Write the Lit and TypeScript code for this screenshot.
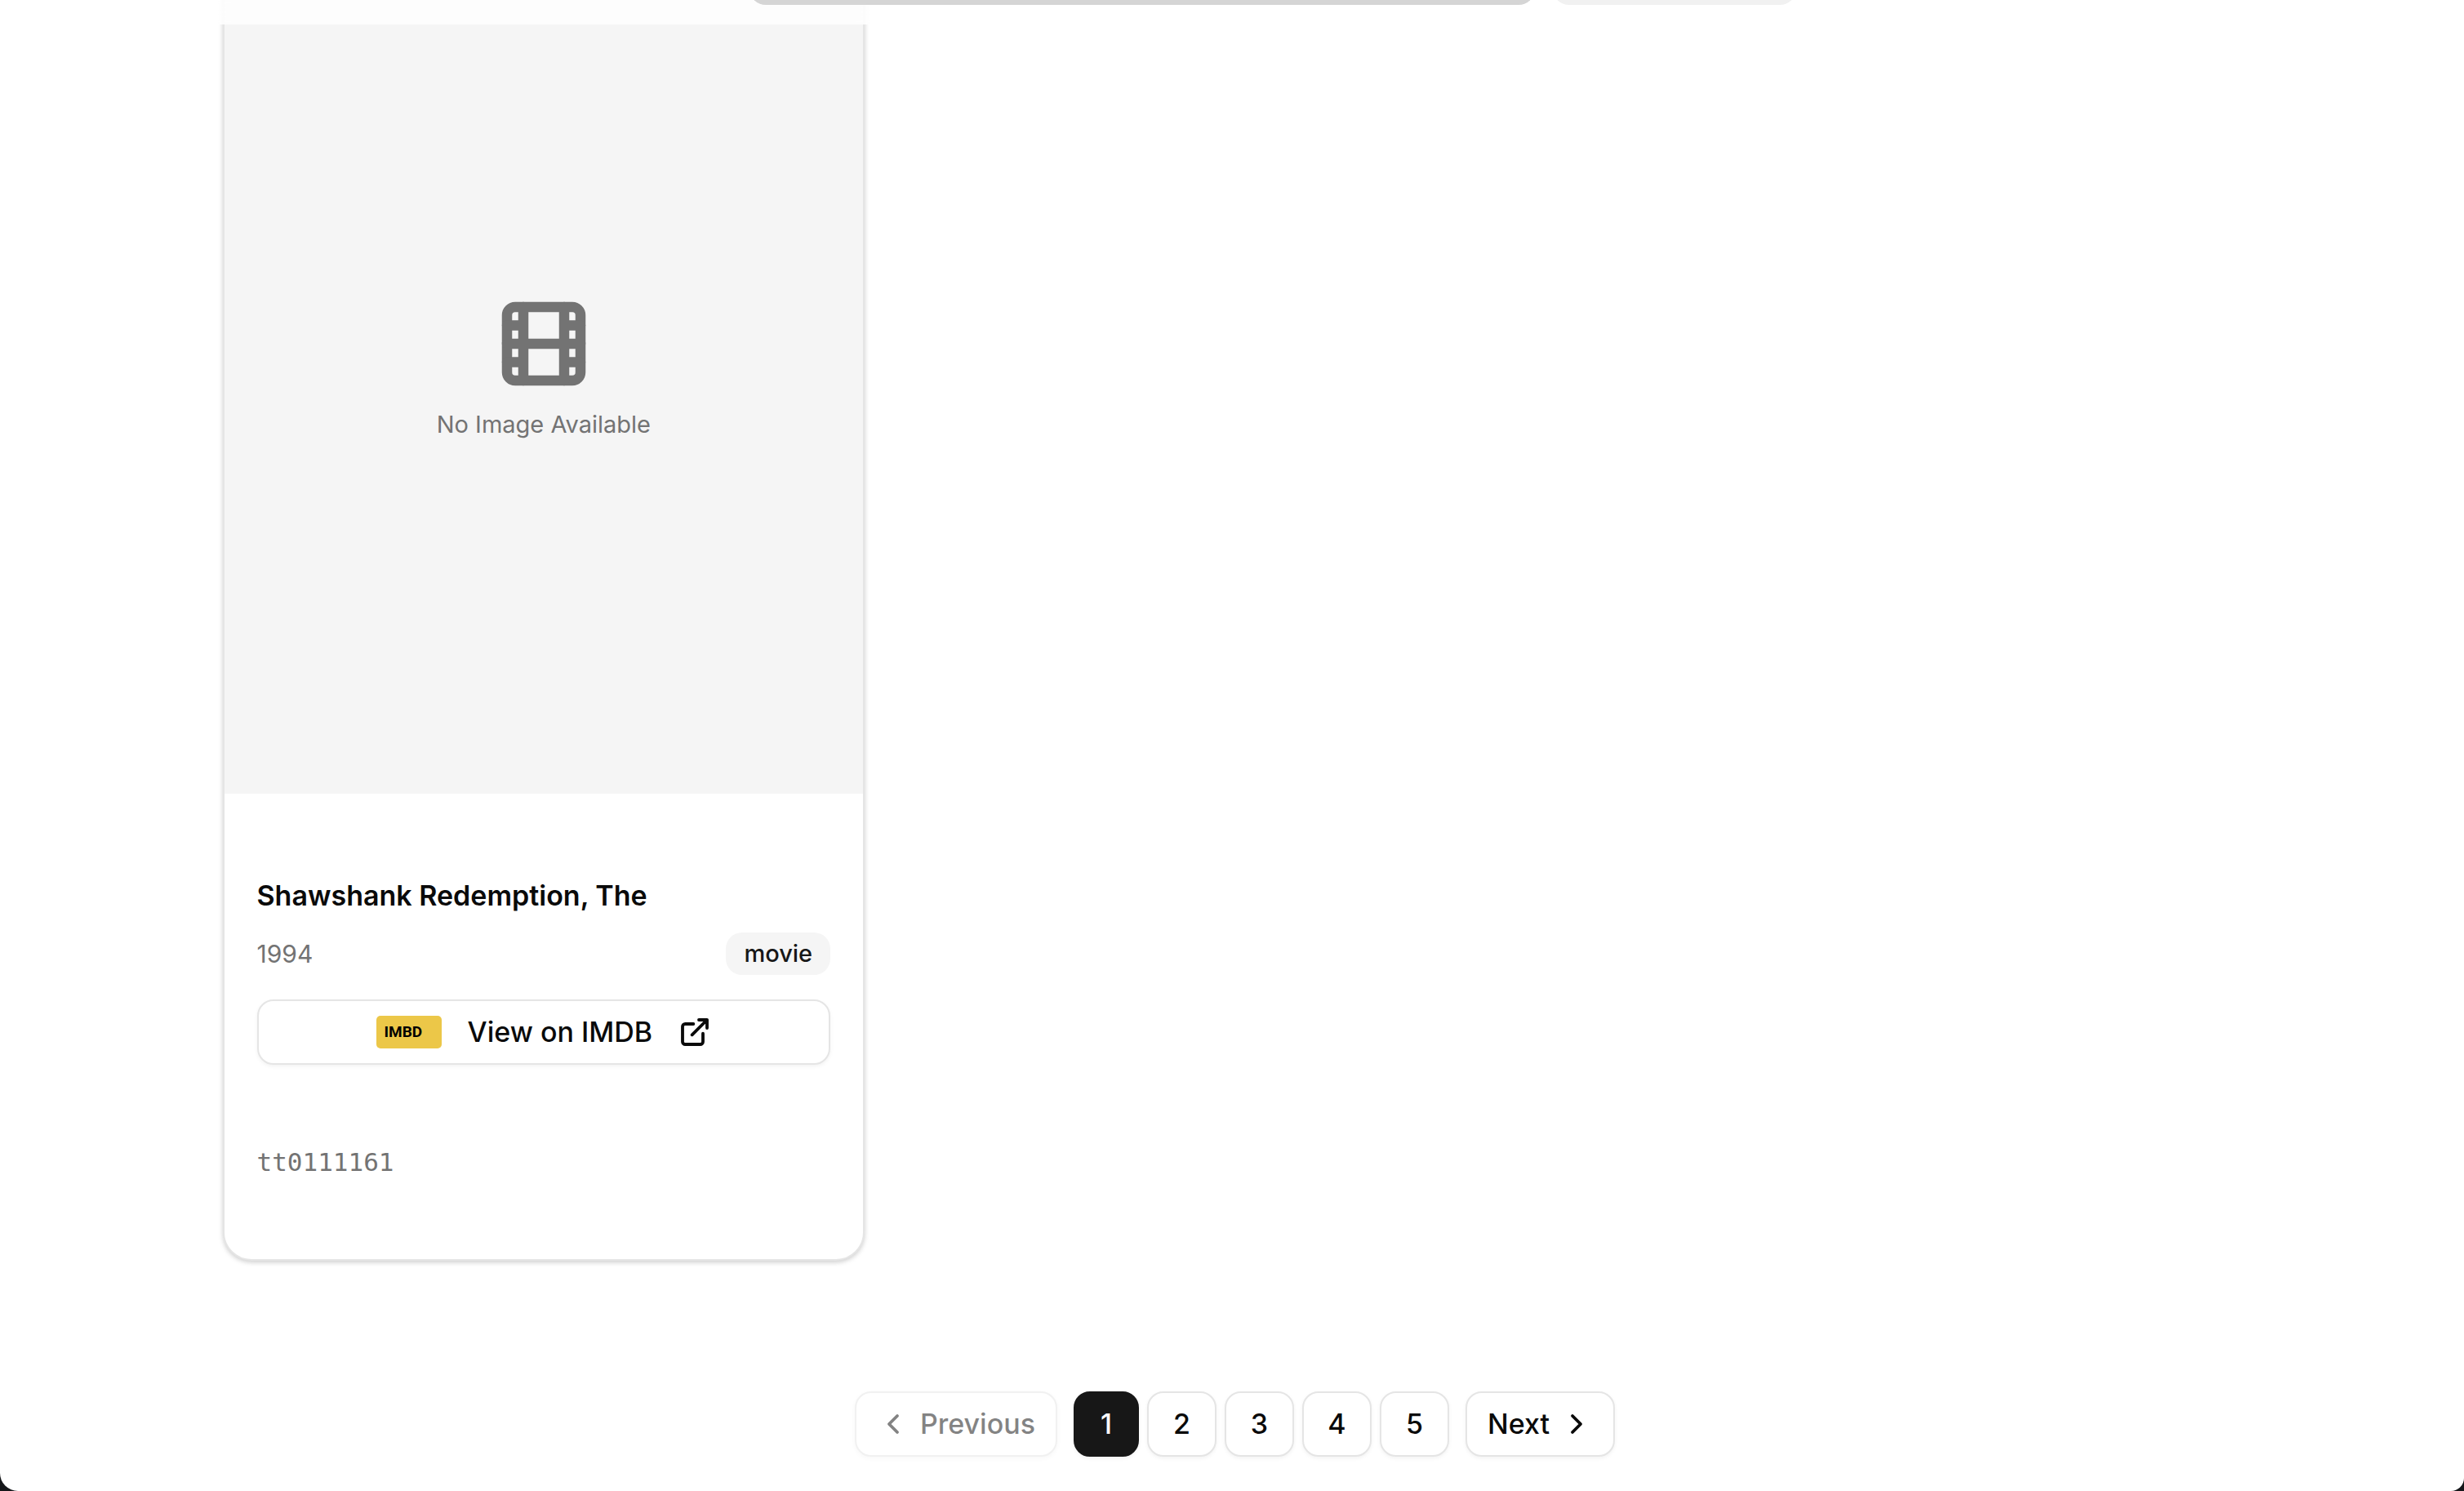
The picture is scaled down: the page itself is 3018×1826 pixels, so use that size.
import { LitElement, html, css, svg } from "lit";
import { customElement, property, state } from "lit/decorators.js";

const chevronLeft = svg`<path d="m15 18-6-6 6-6" />`;
const chevronRight = svg`<path d="m9 18 6-6-6-6" />`;

@customElement("movie-card")
class MovieCard extends LitElement {
  @property() name = "";
  @property() year = "";
  @property() kind = "";
  @property() imdbId = "";

  static styles = css`
    :host {
      display: block;
      box-sizing: border-box;
      overflow: hidden;
      border: 2px solid #e5e5e5;
      border-radius: 35px;
      background: #fff;
      box-shadow: 0 2px 7px rgba(0, 0, 0, 0.1), 0 2px 5px rgba(0, 0, 0, 0.1);
    }
    .poster {
      display: flex;
      flex-direction: column;
      align-items: center;
      justify-content: center;
      gap: 20px;
      aspect-ratio: 3 / 4;
      background: #f5f5f5;
      color: #737373;
      font-size: 29px;
      line-height: 38px;
    }
    .film {
      width: 120px;
      height: 120px;
    }
    .icon {
      fill: none;
      stroke: currentColor;
      stroke-linecap: round;
      stroke-linejoin: round;
    }
    .body {
      display: flex;
      flex-direction: column;
      padding: 100px 40px;
    }
    .title {
      margin: 0 0 20px;
      font-size: 34px;
      font-weight: 600;
      line-height: 50px;
    }
    .meta {
      display: flex;
      align-items: center;
      justify-content: space-between;
      margin-bottom: 30px;
      line-height: 52px;
    }
    .year {
      color: #737373;
      font-size: 30px;
    }
    .badge {
      padding: 0 22px;
      border-radius: 20px;
      background: #f5f5f5;
      color: #171717;
      font-size: 29px;
      font-weight: 500;
    }
    .link {
      display: flex;
      align-items: center;
      justify-content: center;
      gap: 32px;
      box-sizing: border-box;
      height: 80px;
      margin-bottom: 100px;
      border: 2px solid #e5e5e5;
      border-radius: 20px;
      background: #fff;
      box-shadow: 0 2px 5px rgba(0, 0, 0, 0.05);
      color: #0a0a0a;
      font-size: 34px;
      font-weight: 500;
      text-decoration: none;
    }
    .logo {
      box-sizing: border-box;
      width: 80px;
      height: 40px;
      padding-left: 10px;
      border-radius: 5px;
      background: #ecc748;
      color: #000;
      font: 700 19px/40px Roboto, sans-serif;
    }
    .external {
      width: 40px;
      height: 40px;
    }
    .id {
      color: #737373;
      font: 31px/38px "DejaVu Sans Mono", monospace;
    }
  `;

  render() {
    return html`
      <div class="poster">
        <svg class="icon film" viewBox="0 0 24 24" stroke-width="2.5" aria-hidden="true">
          <rect width="18" height="18" x="3" y="3" rx="2" />
          <path d="M7 3v18M3 7.5h4M3 12h18M3 16.5h4M17 3v18M17 7.5h4M17 16.5h4" />
        </svg>
        <span>No Image Available</span>
      </div>
      <div class="body">
        <h3 class="title">${this.name}</h3>
        <div class="meta">
          <span class="year">${this.year}</span>
          <span class="badge">${this.kind}</span>
        </div>
        <a class="link" href="#${this.imdbId}">
          <span class="logo">IMBD</span>
          <span>View on IMDB</span>
          <svg class="icon external" viewBox="0 0 24 24" stroke-width="2.3" aria-hidden="true">
            <path d="M15 3h6v6M10 14 21 3M18 13v6a2 2 0 0 1-2 2H5a2 2 0 0 1-2-2V8a2 2 0 0 1 2-2h6" />
          </svg>
        </a>
        <span class="id">${this.imdbId}</span>
      </div>
    `;
  }
}

@customElement("page-nav")
class PageNav extends LitElement {
  @property({ type: Number }) pages = 5;
  @state() private current = 1;

  static styles = css`
    :host {
      display: block;
    }
    .nav {
      display: flex;
      justify-content: center;
      gap: 20px;
    }
    .pages {
      display: flex;
      gap: 10px;
    }
    .button {
      display: flex;
      align-items: center;
      justify-content: center;
      gap: 13px;
      box-sizing: border-box;
      height: 80px;
      padding: 0 25px;
      border: 2px solid #e5e5e5;
      border-radius: 20px;
      background: #fff;
      box-shadow: 0 2px 5px rgba(0, 0, 0, 0.05);
      color: #0a0a0a;
      font: 500 34px/50px Inter, sans-serif;
    }
    .button:disabled {
      opacity: 0.5;
    }
    .page {
      width: 85px;
      padding: 0;
    }
    .current {
      width: 80px;
      border-color: #171717;
      background: #171717;
      color: #fafafa;
    }
    .chevron {
      width: 40px;
      height: 40px;
      fill: none;
      stroke: currentColor;
      stroke-width: 2.3;
      stroke-linecap: round;
      stroke-linejoin: round;
    }
  `;

  private go(page: number) {
    this.current = page;
  }

  render() {
    const numbers = Array.from({ length: this.pages }, (_, i) => i + 1);
    return html`
      <nav class="nav" aria-label="Pagination">
        <button class="button" ?disabled=${this.current === 1} @click=${() => this.go(this.current - 1)}>
          <svg class="chevron" viewBox="0 0 24 24" aria-hidden="true">${chevronLeft}</svg>
          Previous
        </button>
        <div class="pages">
          ${numbers.map(
            (n) => html`<button
              class="button page ${n === this.current ? "current" : ""}"
              @click=${() => this.go(n)}
            >${n}</button>`
          )}
        </div>
        <button
          class="button"
          ?disabled=${this.current === this.pages}
          @click=${() => this.go(this.current + 1)}
        >
          Next
          <svg class="chevron" viewBox="0 0 24 24" aria-hidden="true">${chevronRight}</svg>
        </button>
      </nav>
    `;
  }
}

@customElement("app-root")
class AppRoot extends LitElement {
  static styles = css`
    :host {
      display: block;
      background: #15171a;
      color: #0a0a0a;
      font-family: Inter, sans-serif;
    }
    .window {
      position: relative;
      box-sizing: border-box;
      min-height: 100vh;
      padding-left: 7px;
      overflow: hidden;
      border-radius: 0 0 16px 22px;
      background: #fff;
    }
    .container {
      box-sizing: border-box;
      max-width: 2560px;
      margin: 0 auto;
      padding: 0 40px;
    }
    .header {
      position: absolute;
      inset: 0 0 auto 7px;
      height: 30px;
      overflow: hidden;
      background: rgba(255, 255, 255, 0.8);
      backdrop-filter: blur(20px);
    }
    .toolbar {
      display: grid;
      grid-template-columns: 645fr 962fr 22fr 298fr 553fr;
      margin-top: -74px;
    }
    .field,
    .action {
      height: 80px;
      border-radius: 20px;
    }
    .field {
      grid-column: 2;
      background: #d5d5d5;
    }
    .action {
      grid-column: 4;
      background: #f1f1f1;
    }
    .results {
      display: grid;
      grid-template-columns: repeat(3, 1fr);
      gap: 60px;
      margin-top: -74px;
      margin-bottom: 160px;
    }
  `;

  render() {
    return html`
      <div class="window">
        <main class="container">
          <div class="results">
            <movie-card
              name="Shawshank Redemption, The"
              year="1994"
              kind="movie"
              .imdbId=${"tt0111161"}
            ></movie-card>
          </div>
          <page-nav .pages=${5}></page-nav>
        </main>
        <header class="header">
          <div class="container">
            <div class="toolbar">
              <div class="field"></div>
              <div class="action"></div>
            </div>
          </div>
        </header>
      </div>
    `;
  }
}
